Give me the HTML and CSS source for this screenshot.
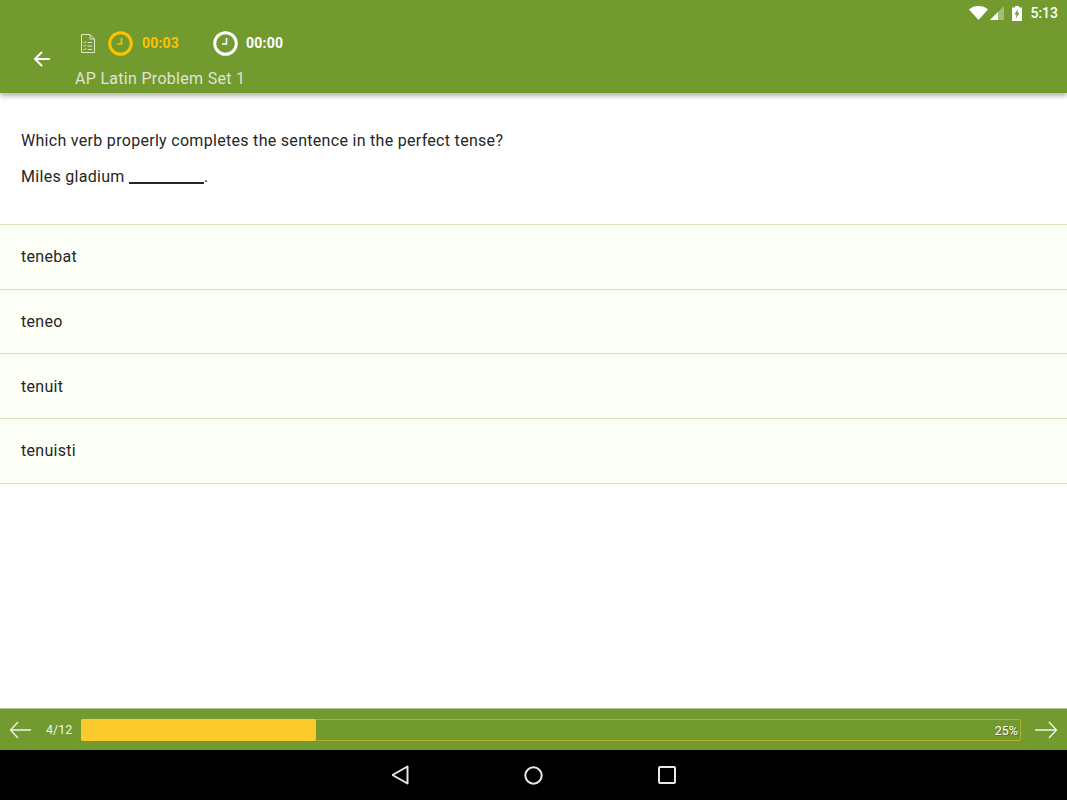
FILE: index.html
```html
<!DOCTYPE html>
<html lang="en">
<head>
<meta charset="utf-8">
<title>AP Latin Problem Set 1</title>
<link rel="stylesheet" href="styles.css">
</head>
<body>
<div class="screen">
  <header class="appbar">
    <div class="status">
      <svg class="st-wifi" width="19" height="14" viewBox="0 0 19 14"><path d="M0 3.400C2.500 1.200 5.800 0 9.500 0s7 1.200 9.500 3.400L9.500 14z" fill="#fff"/></svg>
      <svg class="st-signal" width="14" height="14" viewBox="0 0 14 14"><path d="M14 0v14H0z" fill="#fff" fill-opacity=".35"/><path d="M8 6v8H0z" fill="#fff"/></svg>
      <svg class="st-batt" width="10" height="15" viewBox="0 0 10 15"><path d="M3 0h4v1.500h3V15H0V1.500h3z" fill="#fff"/><path d="M5.800 3 2.500 8.500h2L4 12.500 7.500 6.800h-2.100z" fill="#739a2f"/></svg>
      <span class="st-time">5:13</span>
    </div>
    <div class="bar-main">
      <button class="back" aria-label="Back">
        <svg width="18" height="18" viewBox="0 0 18 18"><path d="M17 9H2M9 2 2 9l7 7" fill="none" stroke="#fff" stroke-width="2"/></svg>
      </button>
      <div class="bar-info">
        <div class="timers">
          <svg class="sheet" width="14" height="19" viewBox="0 0 14 19" fill="none" stroke="#dfe6d0" stroke-width="1"><path d="M.5.500h8.500l4.500 4.500v13.500H.5z"/><path d="M9 .5V5h4.500"/><path d="M2.500 8l1 1 1.500-2M6.500 8.500H11M2.500 11.500l1 1 1.500-2M6.500 12H11M2.500 15l1 1 1.500-2M6.500 15.500H11"/></svg>
          <svg class="clock" width="25" height="25" viewBox="0 0 25 25" fill="none" stroke="#fcc200"><circle cx="12.500" cy="12.500" r="10.800" stroke-width="3"/><path d="M13.500 7v6H9" stroke-width="1.600"/></svg>
          <span class="t-val t-yellow">00:03</span>
          <svg class="clock clock-b" width="25" height="25" viewBox="0 0 25 25" fill="none" stroke="#fff"><circle cx="12.500" cy="12.500" r="10.800" stroke-width="3"/><path d="M13.500 7v6H9" stroke-width="1.600"/></svg>
          <span class="t-val t-second">00:00</span>
        </div>
        <div class="set-title">AP Latin Problem Set 1</div>
      </div>
    </div>
  </header>
  <main class="content">
    <section class="question">
      <p>Which verb properly completes the sentence in the perfect tense?</p>
      <p>Miles gladium <span class="blank"></span>.</p>
    </section>
    <ul class="answers">
      <li>tenebat</li>
      <li>teneo</li>
      <li>tenuit</li>
      <li>tenuisti</li>
    </ul>
  </main>
  <div class="progressbar">
    <svg class="arrow" width="22" height="18" viewBox="0 0 22 18"><path d="M22 9H1.500M9 1 1.500 9 9 17" fill="none" stroke="#f2f5ea" stroke-width="1.300"/></svg>
    <span class="count">4/12</span>
    <div class="track">
      <div class="fill" style="width:25%"></div>
      <span class="pct">25%</span>
    </div>
    <svg class="arrow" width="23" height="18" viewBox="0 0 23 18"><path d="M0 9h21.500M14 1l7.500 8-7.500 8" fill="none" stroke="#f2f5ea" stroke-width="1.300"/></svg>
  </div>
  <nav class="navbar">
    <svg width="18" height="20" viewBox="0 0 18 20"><path d="M15.500 1.500v17L.5 10z" fill="none" stroke="#e8e8e8" stroke-width="2" stroke-linejoin="round"/></svg>
    <svg width="19" height="19" viewBox="0 0 19 19"><circle cx="9.500" cy="9.500" r="8.200" fill="none" stroke="#e8e8e8" stroke-width="2"/></svg>
    <svg width="18" height="18" viewBox="0 0 18 18"><rect x="1" y="1" width="16" height="16" rx="1" fill="none" stroke="#e8e8e8" stroke-width="2"/></svg>
  </nav>
</div>
</body>
</html>
```
FILE: styles.css
```css
* { box-sizing: border-box; }
html, body { margin: 0; padding: 0; }
body { font-family: Roboto, "Liberation Sans", sans-serif; background: #fff; color: #262626; }
.screen { width: 1067px; height: 800px; display: flex; flex-direction: column; overflow: hidden; }

.appbar { height: 93px; flex: none; background: #739a2f; box-shadow: 0 3px 5px rgba(0,0,0,.3); position: relative; z-index: 1; color: #fff; }
.status { height: 26px; display: flex; align-items: center; justify-content: flex-end; padding-right: 9px; }
.st-wifi { margin-right: 2px; }
.st-signal { margin-right: 8px; }
.st-batt { margin-right: 8px; }
.st-time { font-size: 14px; font-weight: 500; color: #fff; line-height: 26px; }

.bar-main { display: flex; align-items: flex-start; height: 67px; }
.back { width: 75px; height: 67px; flex: none; border: 0; padding: 0 0 1px 8px; background: none; display: flex; align-items: center; justify-content: center; }
.bar-info { display: flex; flex-direction: column; }
.timers { display: flex; align-items: center; height: 34px; padding-left: 6px; }
.sheet { margin-right: 13px; }
.t-val { font-size: 14px; font-weight: 700; color: #fff; margin-left: 9px; letter-spacing: .2px; }
.t-yellow { color: #fcc200; }
.clock-b { margin-left: 34px; }
.t-second { margin-left: 8px; }
.set-title { font-size: 16px; color: #dfe5d3; line-height: 20px; margin-top: 9px; letter-spacing: .3px; }

.content { flex: 1; background: #fff; }
.question { height: 131px; padding: 38px 21px 0; font-size: 16px; line-height: 20px; letter-spacing: .3px; }
.question p { margin: 0 0 16px; }
.blank { display: inline-block; width: 75px; border-bottom: 2px solid #262626; vertical-align: -2px; }
.answers { list-style: none; margin: 0; padding: 0; border-top: 1px solid #d6e5b8; }
.answers li { height: 64.700px; padding-left: 21px; display: flex; align-items: center; font-size: 16px; letter-spacing: .3px; background: #fcfff6; border-bottom: 1px solid #d6e5b8; }

.progressbar { height: 41px; flex: none; display: flex; align-items: center; background: #739a2f; box-shadow: 0 -1px 0 #b4c68e; padding: 0 9px 0 9px; }
.arrow { flex: none; }
.count { font-size: 12.500px; color: #f2f5ea; margin-left: 15px; width: 35px; flex: none; }
.track { flex: 1; height: 22px; position: relative; border: 1px solid #b3ac2e; border-radius: 2px; margin-right: 14px; }
.fill { background: #fdca2e; border-radius: 2px; margin: -1px 0 0 -1px; height: 22px; }
.pct { position: absolute; right: 2px; top: 3px; font-size: 12.500px; line-height: 16px; color: #fff; text-shadow: 1px 1px 1px rgba(0,0,0,.3); }

.navbar { height: 50px; flex: none; background: #000; display: flex; align-items: center; justify-content: center; gap: 114.500px; }
```
